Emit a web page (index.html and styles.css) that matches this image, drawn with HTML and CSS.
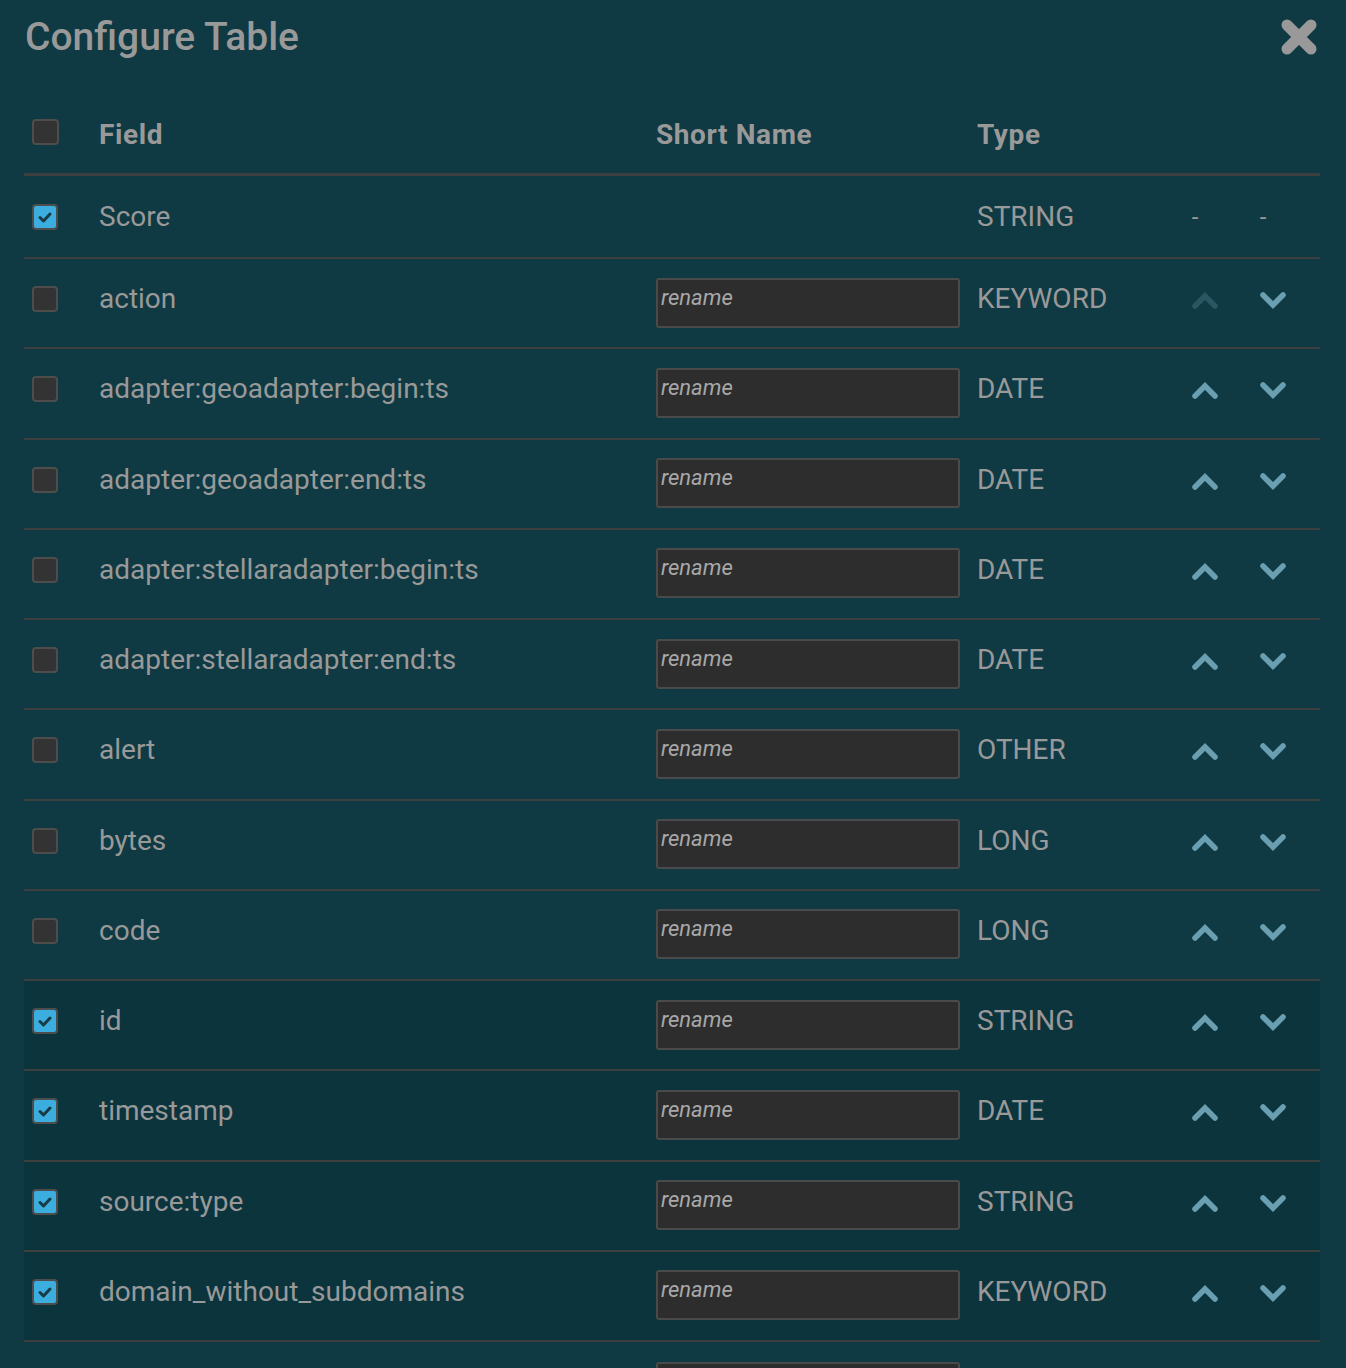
FILE: index.html
```html
<!DOCTYPE html>
<html lang="en">
<head>
<meta charset="utf-8">
<title>Configure Table</title>
<link rel="stylesheet" href="styles.css">
</head>
<body>
<div class="modal">
  <div class="title-bar">
    <h1 class="title">Configure Table</h1>
    <button class="close" aria-label="Close">
      <svg width="36" height="36" viewBox="0 0 36 36"><path d="M6 6 L30 30 M30 6 L6 30" stroke="#999" stroke-width="11" stroke-linecap="round"/></svg>
    </button>
  </div>

  <div class="table">
    <div class="row head">
      <span class="cb"></span>
      <span>Field</span>
      <span>Short Name</span>
      <span>Type</span>
      <span></span><span></span>
    </div>

    <div class="row first">
      <span class="cb checked"><svg viewBox="0 0 22 22"><path d="M6 11.5 L9.5 15 L16 8" fill="none" stroke="#173c45" stroke-width="3" stroke-linecap="round" stroke-linejoin="round"/></svg></span>
      <span class="field">Score</span>
      <span></span>
      <span class="type">STRING</span>
      <span class="dash">-</span><span class="dash">-</span>
    </div>

    <div class="row">
      <span class="cb"></span><span class="field">action</span>
      <input class="rename" placeholder="rename"><span class="type">KEYWORD</span>
      <span class="arrow disabled"><svg viewBox="0 0 28 20"><path d="M4 16 L14 6 L24 16"/></svg></span>
      <span class="arrow"><svg viewBox="0 0 28 20"><path d="M4 5 L14 15 L24 5"/></svg></span>
    </div>

    <div class="row">
      <span class="cb"></span><span class="field">adapter:geoadapter:begin:ts</span>
      <input class="rename" placeholder="rename"><span class="type">DATE</span>
      <span class="arrow"><svg viewBox="0 0 28 20"><path d="M4 16 L14 6 L24 16"/></svg></span>
      <span class="arrow"><svg viewBox="0 0 28 20"><path d="M4 5 L14 15 L24 5"/></svg></span>
    </div>

    <div class="row">
      <span class="cb"></span><span class="field">adapter:geoadapter:end:ts</span>
      <input class="rename" placeholder="rename"><span class="type">DATE</span>
      <span class="arrow"><svg viewBox="0 0 28 20"><path d="M4 16 L14 6 L24 16"/></svg></span>
      <span class="arrow"><svg viewBox="0 0 28 20"><path d="M4 5 L14 15 L24 5"/></svg></span>
    </div>

    <div class="row">
      <span class="cb"></span><span class="field">adapter:stellaradapter:begin:ts</span>
      <input class="rename" placeholder="rename"><span class="type">DATE</span>
      <span class="arrow"><svg viewBox="0 0 28 20"><path d="M4 16 L14 6 L24 16"/></svg></span>
      <span class="arrow"><svg viewBox="0 0 28 20"><path d="M4 5 L14 15 L24 5"/></svg></span>
    </div>

    <div class="row">
      <span class="cb"></span><span class="field">adapter:stellaradapter:end:ts</span>
      <input class="rename" placeholder="rename"><span class="type">DATE</span>
      <span class="arrow"><svg viewBox="0 0 28 20"><path d="M4 16 L14 6 L24 16"/></svg></span>
      <span class="arrow"><svg viewBox="0 0 28 20"><path d="M4 5 L14 15 L24 5"/></svg></span>
    </div>

    <div class="row">
      <span class="cb"></span><span class="field">alert</span>
      <input class="rename" placeholder="rename"><span class="type">OTHER</span>
      <span class="arrow"><svg viewBox="0 0 28 20"><path d="M4 16 L14 6 L24 16"/></svg></span>
      <span class="arrow"><svg viewBox="0 0 28 20"><path d="M4 5 L14 15 L24 5"/></svg></span>
    </div>

    <div class="row">
      <span class="cb"></span><span class="field">bytes</span>
      <input class="rename" placeholder="rename"><span class="type">LONG</span>
      <span class="arrow"><svg viewBox="0 0 28 20"><path d="M4 16 L14 6 L24 16"/></svg></span>
      <span class="arrow"><svg viewBox="0 0 28 20"><path d="M4 5 L14 15 L24 5"/></svg></span>
    </div>

    <div class="row">
      <span class="cb"></span><span class="field">code</span>
      <input class="rename" placeholder="rename"><span class="type">LONG</span>
      <span class="arrow"><svg viewBox="0 0 28 20"><path d="M4 16 L14 6 L24 16"/></svg></span>
      <span class="arrow"><svg viewBox="0 0 28 20"><path d="M4 5 L14 15 L24 5"/></svg></span>
    </div>

    <div class="row selected">
      <span class="cb checked"><svg viewBox="0 0 22 22"><path d="M6 11.5 L9.5 15 L16 8" fill="none" stroke="#173c45" stroke-width="3" stroke-linecap="round" stroke-linejoin="round"/></svg></span><span class="field">id</span>
      <input class="rename" placeholder="rename"><span class="type">STRING</span>
      <span class="arrow"><svg viewBox="0 0 28 20"><path d="M4 16 L14 6 L24 16"/></svg></span>
      <span class="arrow"><svg viewBox="0 0 28 20"><path d="M4 5 L14 15 L24 5"/></svg></span>
    </div>

    <div class="row selected">
      <span class="cb checked"><svg viewBox="0 0 22 22"><path d="M6 11.5 L9.5 15 L16 8" fill="none" stroke="#173c45" stroke-width="3" stroke-linecap="round" stroke-linejoin="round"/></svg></span><span class="field">timestamp</span>
      <input class="rename" placeholder="rename"><span class="type">DATE</span>
      <span class="arrow"><svg viewBox="0 0 28 20"><path d="M4 16 L14 6 L24 16"/></svg></span>
      <span class="arrow"><svg viewBox="0 0 28 20"><path d="M4 5 L14 15 L24 5"/></svg></span>
    </div>

    <div class="row selected">
      <span class="cb checked"><svg viewBox="0 0 22 22"><path d="M6 11.5 L9.5 15 L16 8" fill="none" stroke="#173c45" stroke-width="3" stroke-linecap="round" stroke-linejoin="round"/></svg></span><span class="field">source:type</span>
      <input class="rename" placeholder="rename"><span class="type">STRING</span>
      <span class="arrow"><svg viewBox="0 0 28 20"><path d="M4 16 L14 6 L24 16"/></svg></span>
      <span class="arrow"><svg viewBox="0 0 28 20"><path d="M4 5 L14 15 L24 5"/></svg></span>
    </div>

    <div class="row selected">
      <span class="cb checked"><svg viewBox="0 0 22 22"><path d="M6 11.5 L9.5 15 L16 8" fill="none" stroke="#173c45" stroke-width="3" stroke-linecap="round" stroke-linejoin="round"/></svg></span><span class="field">domain_without_subdomains</span>
      <input class="rename" placeholder="rename"><span class="type">KEYWORD</span>
      <span class="arrow"><svg viewBox="0 0 28 20"><path d="M4 16 L14 6 L24 16"/></svg></span>
      <span class="arrow"><svg viewBox="0 0 28 20"><path d="M4 5 L14 15 L24 5"/></svg></span>
    </div>

    <div class="row partial">
      <span></span><span></span>
      <input class="rename" placeholder="rename">
    </div>
  </div>
</div>
</body>
</html>
```

FILE: styles.css
```css
* { box-sizing: border-box; }

body {
  margin: 0;
  background: #0f3a43;
  color: #999;
  font-family: Roboto, "Liberation Sans", Arial, sans-serif;
}

.modal {
  padding: 0 26px 0 24px;
}

.title-bar {
  height: 74px;
  display: flex;
  align-items: center;
  justify-content: space-between;
}

.title {
  margin: 0 0 0 1px;
  font-size: 39px;
  font-weight: 500;
  color: #999;
  line-height: 1;
}

.close {
  background: none;
  border: 0;
  padding: 0;
  margin-right: 3px;
  width: 36px;
  height: 36px;
  cursor: pointer;
}
.close svg { display: block; }

.row {
  display: grid;
  grid-template-columns: 75px 557px 321px 1fr 68px 68px;
  padding-right: 13px;
  padding-bottom: 8px;
  align-items: center;
  height: 90.25px;
  border-bottom: 2px solid #3d3f3f;
  font-size: 28px;
}

.row.head {
  height: 102px;
  padding-top: 22px;
  padding-bottom: 0;
  border-bottom: 3px solid #403f3f;
  font-weight: 700;
  letter-spacing: 0.6px;
}

.row.first {
  height: 83px;
  padding-bottom: 0;
}

.row.selected {
  background: #0c343d;
}

.row.partial {
  border-bottom: 0;
}

.cb {
  display: block;
  width: 26px;
  height: 26px;
  margin-left: 8px;
  border: 2px solid #4d4d4d;
  border-radius: 4px;
  background: #333;
}
.row.head .cb { width: 27px; margin-top: -5px; }

.cb.checked {
  background: #3badde;
}
.cb svg { display: block; width: 22px; height: 22px; }

.field, .type {
  line-height: 1;
}

.rename {
  width: 304px;
  height: 50px;
  margin-top: 7px;
  padding: 0 0 11px 3px;
  border: 2px solid #4a4a4a;
  border-radius: 3px;
  background: #2d2d2d;
  color: #aaa;
  font-family: Roboto, "Liberation Sans", Arial, sans-serif;
  font-size: 22px;
  font-style: italic;
}
.rename::placeholder {
  color: #a8a8a8;
  opacity: 1;
}

.dash {
  text-align: center;
  padding-right: 20px;
  font-size: 24px;
}

.arrow {
  display: flex;
  justify-content: center;
  margin-top: 2px;
}
.arrow svg {
  width: 28px;
  height: 20px;
  fill: none;
  stroke: #6a9fb1;
  stroke-width: 5.5;
  stroke-linecap: round;
  stroke-linejoin: miter;
}
.arrow.disabled svg {
  stroke: #285761;
}
```
